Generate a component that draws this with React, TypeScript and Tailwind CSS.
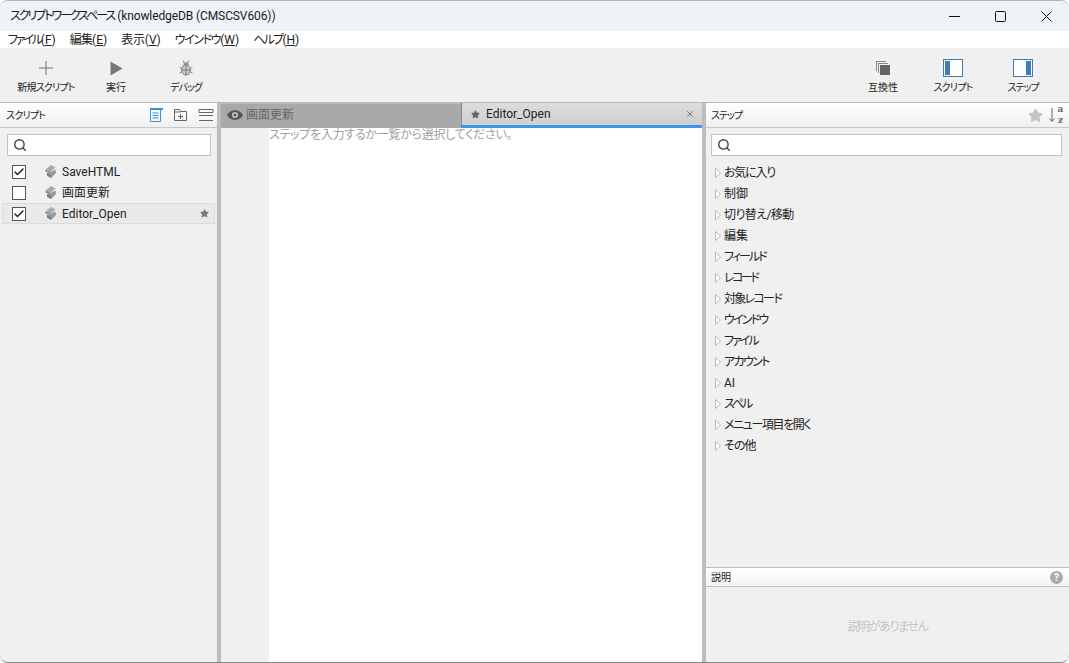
import { Search, X, Star, Check } from "lucide-react";

const menus = [
  { label: "ファイル", key: "F", tracking: "tracking-[-2.2px]" },
  { label: "編集", key: "E", tracking: "tracking-[-0.8px]" },
  { label: "表示", key: "V", tracking: "tracking-[-0.2px]" },
  { label: "ウインドウ", key: "W", tracking: "tracking-[-1.4px]" },
  { label: "ヘルプ", key: "H", tracking: "tracking-[-1.7px]" },
];

const categories = [
  { label: "お気に入り", tracking: "tracking-[-1.2px]" },
  { label: "制御", tracking: "" },
  { label: "切り替え/移動", tracking: "tracking-[-0.6px]" },
  { label: "編集", tracking: "" },
  { label: "フィールド", tracking: "tracking-[-2px]" },
  { label: "レコード", tracking: "tracking-[-2.5px]" },
  { label: "対象レコード", tracking: "tracking-[-1.7px]" },
  { label: "ウインドウ", tracking: "tracking-[-1.8px]" },
  { label: "ファイル", tracking: "tracking-[-2px]" },
  { label: "アカウント", tracking: "tracking-[-1.6px]" },
  { label: "AI", tracking: "" },
  { label: "スペル", tracking: "tracking-[-2px]" },
  { label: "メニュー項目を開く", tracking: "tracking-[-1.4px]" },
  { label: "その他", tracking: "tracking-[-1px]" },
];

const scripts = [
  { name: "SaveHTML", checked: true },
  { name: "画面更新", checked: false },
  { name: "Editor_Open", checked: true, active: true },
];

const ScriptIcon = () => (
  <svg width="13" height="15" viewBox="0 0 13 15" className="shrink-0">
    <path d="M1.500 5.500L7 1L11.500 3.500L6.500 8Z" fill="#aaa" />
    <path d="M1.500 5.500L6.500 8L6.500 9.500L1.500 7.500Z" fill="#888" />
    <path d="M6.500 8L11.500 5.500L12 9L7 14L3 11.500L3 9Z" fill="#999" />
    <path d="M3 9L7 11L7 14L3 11.500Z" fill="#7c7c7c" />
  </svg>
);

const ToolButton = ({ label, icon, className, tracking = "" }: { label: string; icon: React.ReactNode; className: string; tracking?: string }) => (
  <div className={`flex flex-col items-center ${className}`}>
    <div className="h-[22px] flex items-center justify-center">{icon}</div>
    <span className={`text-[10px] leading-[14px] text-[#222] mt-[2px] whitespace-nowrap ${tracking}`}>{label}</span>
  </div>
);

const SearchBox = () => (
  <div className="h-[22px] bg-white border border-[#c4c4c4] flex items-center pl-[5px]">
    <Search className="w-[14px] h-[14px] text-[#444]" strokeWidth={2.4} />
  </div>
);

const PanelIcon = ({ side }: { side: "left" | "right" }) => (
  <div className={`w-[20px] h-[18px] border border-[#3f7fb5] bg-white flex ${side === "right" ? "justify-end" : ""}`}>
    <div className="w-[5px] mx-[1px] my-[1px] bg-[#3f7fb5]" />
  </div>
);

export default function App() {
  return (
    <div
      className='w-[1069px] h-[663px] overflow-hidden flex flex-col bg-[#f0f0f0] text-[#222] rounded-[8px] border-t border-t-[#b4b4b4] border-b border-b-[#888] [font-feature-settings:"palt"]'
      style={{ fontFamily: 'Roboto, "Noto Sans CJK JP", sans-serif' }}
    >
      {/* Title bar */}
      <div className="h-[30px] shrink-0 bg-[#eff3f8] flex items-center pl-[10px]">
        <span className="text-[12px] text-[#1a1a1a] whitespace-nowrap">
          <span className="tracking-[-2.05px]">スクリプトワークスペース</span>
          <span className="ml-[3px] tracking-[-0.1px]">(knowledgeDB (CMSCSV606))</span>
        </span>
        <div className="ml-auto flex items-center">
          <div className="w-[46px] flex justify-center">
            <svg width="11" height="11" viewBox="0 0 11 11"><path d="M0 5.500h11" stroke="#111" /></svg>
          </div>
          <div className="w-[46px] flex justify-center">
            <svg width="11" height="11" viewBox="0 0 11 11"><rect x="0.500" y="0.500" width="10" height="10" rx="1" fill="none" stroke="#111" /></svg>
          </div>
          <div className="w-[46px] flex justify-center">
            <svg width="11" height="11" viewBox="0 0 11 11"><path d="M0.500 0.500l10 10M10.500 0.500l-10 10" stroke="#111" /></svg>
          </div>
        </div>
      </div>

      {/* Menu */}
      <div className="h-[17px] shrink-0 bg-white flex items-center pl-[8px] gap-[14px] text-[12px]">
        {menus.map((m) => (
          <span key={m.key} className="whitespace-nowrap">
            <span className={m.tracking}>{m.label}</span>(<span className="underline">{m.key}</span>)
          </span>
        ))}
      </div>

      {/* Toolbar */}
      <div className="h-[55px] shrink-0 bg-[#f0f0f0] border-b border-[#b9b9b9] flex pt-[9px]">
        <ToolButton
          className="w-[60px] ml-[16px]"
          tracking="tracking-[-0.8px]"
          label="新規スクリプト"
          icon={
            <svg width="14" height="14" viewBox="0 0 14 14"><path d="M7 0v14M0 7h14" stroke="#707070" /></svg>
          }
        />
        <ToolButton
          className="w-[40px] ml-[20px]"
          label="実行"
          icon={
            <svg width="13" height="15" viewBox="0 0 13 15"><path d="M0.500 0.500L12.500 7.500L0.500 14.500Z" fill="#777" /></svg>
          }
        />
        <ToolButton
          className="w-[40px] ml-[30px]"
          tracking="tracking-[-1px]"
          label="デバッグ"
          icon={
            <svg width="14" height="16" viewBox="0 0 14 16" fill="none">
              <path d="M4 0.500l1.500 3M10 0.500L8.500 3.500M0.500 7l2 1.500M13.500 7l-2 1.500M0.500 13l2-1M13.500 13l-2-1" stroke="#888" />
              <circle cx="7" cy="4.500" r="2.500" fill="#999" />
              <ellipse cx="7" cy="10" rx="4.500" ry="5" fill="#ccc" stroke="#777" />
              <path d="M7 5.500v9.500M2.500 10h9" stroke="#777" />
            </svg>
          }
        />
        <div className="ml-auto flex">
          <ToolButton
            className="w-[40px]"
            label="互換性"
            icon={
              <svg width="16" height="16" viewBox="0 0 16 16">
                <path d="M1 1h10v1H2v9H1z M3 3h10v1H4v9H3z" fill="#888" />
                <rect x="5" y="5" width="10" height="10" fill="#666" />
              </svg>
            }
          />
          <ToolButton className="w-[50px] ml-[25px]" tracking="tracking-[-0.8px]" label="スクリプト" icon={<PanelIcon side="left" />} />
          <ToolButton className="w-[50px] ml-[20px] mr-[21px]" tracking="tracking-[-1px]" label="ステップ" icon={<PanelIcon side="right" />} />
        </div>
      </div>

      <div className="flex-1 flex min-h-0">
        {/* Scripts panel */}
        <div className="w-[217px] shrink-0 flex flex-col">
          <div className="h-[25px] bg-gradient-to-b from-white to-[#f0f0f0] border-b border-[#c8c8c8] flex items-center pl-[6px] pr-[3px]">
            <span className="text-[10px] tracking-[-0.8px]">スクリプト</span>
            <div className="ml-auto flex items-center gap-[10px]">
              <svg width="14" height="14" viewBox="0 0 14 14">
                <rect x="1" y="0" width="13" height="2" fill="#3d8fd6" />
                <path d="M1.500 2v11.500h10V2M3.500 5h6M3.500 7.500h6M3.500 10h6" stroke="#3d8fd6" fill="none" />
              </svg>
              <svg width="15" height="14" viewBox="0 0 15 14">
                <path d="M1.500 12.500V1.500h5l1 2h6v9zM1.500 4h6M7.500 6v5M5 8.500h5" stroke="#666" fill="none" />
              </svg>
              <svg width="16" height="14" viewBox="0 0 16 14">
                <path d="M1 1.500h14v3H1zM1 7.500h14M1 12.500h14" stroke="#666" fill="none" />
              </svg>
            </div>
          </div>
          <div className="pl-[7px] pr-[6px] pt-[6px] pb-[5px]">
            <SearchBox />
          </div>
          <div className="px-[2px]">
            {scripts.map((s) => (
              <div
                key={s.name}
                className={`h-[21px] flex items-center pl-[9px] pr-[5px] border ${s.active ? "bg-[#e9e9e9] border-[#dcdcdc]" : "border-transparent"}`}
              >
                <div className="w-[14px] h-[14px] bg-white border border-[#555] flex items-center justify-center shrink-0">
                  {s.checked && <Check className="w-[12px] h-[12px] text-[#222]" strokeWidth={3} />}
                </div>
                <div className="ml-[18px]"><ScriptIcon /></div>
                <span className="ml-[5px] text-[12px]">{s.name}</span>
                {s.active && <Star className="ml-auto w-[9px] h-[9px] text-[#777] fill-[#777]" />}
              </div>
            ))}
          </div>
        </div>

        <div className="w-[4px] shrink-0 bg-[#bdbdbd]" />

        {/* Editor */}
        <div className="w-[481px] shrink-0 flex flex-col bg-white">
          <div className="h-[25px] shrink-0 flex">
            <div className="w-[240px] bg-[#a9a9a9] flex items-center pl-[6px] pb-[2px] gap-[3px] border-t border-[#bdbdbd]">
              <svg width="16" height="10" viewBox="0 0 16 10">
                <path d="M0 5C3 -1.500 13 -1.500 16 5C13 11.500 3 11.500 0 5Z" fill="#555" />
                <circle cx="8" cy="5" r="3" fill="#c8c8c8" />
                <circle cx="8" cy="5" r="1.500" fill="#555" />
              </svg>
              <span className="text-[12px] text-[#666]">画面更新</span>
            </div>
            <div className="flex-1 bg-gradient-to-b from-[#dcdcdc] to-[#d0d0d0] border-b-[3px] border-[#3f97ea] border-l border-l-[#888] flex items-center pl-[9px] pr-[7px]">
              <Star className="w-[9px] h-[9px] text-[#666] fill-[#666]" />
              <span className="ml-[6px] text-[12px]">Editor_Open</span>
              <X className="ml-auto w-[10px] h-[10px] text-[#666]" />
            </div>
          </div>
          <div className="flex-1 flex">
            <div className="w-[48px] bg-[#f0f0f0]" />
            <span className="text-[12px] leading-[15px] tracking-[-0.27px] text-[#a0a0a0]">ステップを入力するか一覧から選択してください。</span>
          </div>
        </div>

        <div className="w-[4px] shrink-0 bg-[#bdbdbd]" />

        {/* Steps panel */}
        <div className="flex-1 flex flex-col min-w-0">
          <div className="h-[25px] bg-gradient-to-b from-white to-[#f0f0f0] border-b border-[#c8c8c8] flex items-center pl-[5px] pr-[5px]">
            <span className="text-[10px] tracking-[-1px]">ステップ</span>
            <Star className="ml-auto w-[15px] h-[15px] text-[#c4c4c4] fill-[#c4c4c4]" />
            <svg width="14" height="16" viewBox="0 0 14 16" className="ml-[6px]">
              <path d="M3 1v13M0.500 11.500L3 14.500L5.500 11.500" stroke="#666" fill="none" />
            </svg>
            <div className="ml-[-6px] w-[7px] flex flex-col items-center text-[9px] leading-[11px] font-bold text-[#666] [font-family:'DejaVu_Serif',serif]">
              <span>a</span>
              <span>z</span>
            </div>
          </div>
          <div className="pl-[5px] pr-[7px] pt-[6px] pb-[6px]">
            <SearchBox />
          </div>
          <div className="flex-1 pl-[9px]">
            {categories.map((c) => (
              <div key={c.label} className="h-[21px] flex items-center">
                <svg width="6" height="10" viewBox="0 0 6 10" className="shrink-0">
                  <path d="M0.500 0.500L5.500 5L0.500 9.500Z" fill="#fff" stroke="#bbb" />
                </svg>
                <span className={`ml-[3px] text-[12px] whitespace-nowrap ${c.tracking}`}>{c.label}</span>
              </div>
            ))}
          </div>
          <div className="h-[20px] shrink-0 bg-gradient-to-b from-white to-[#f4f4f4] border-y border-[#bdbdbd] flex items-center pl-[5px] pr-[6px]">
            <span className="text-[10px]">説明</span>
            <div className="ml-auto w-[13px] h-[13px] rounded-full bg-[#aaa] text-white text-[10px] leading-[13px] font-bold text-center">?</div>
          </div>
          <div className="h-[75px] shrink-0 flex items-center justify-center pt-[4px]">
            <span className="text-[12px] tracking-[-1.4px] text-[#c4c4c4]">説明がありません</span>
          </div>
        </div>
      </div>
    </div>
  );
}
